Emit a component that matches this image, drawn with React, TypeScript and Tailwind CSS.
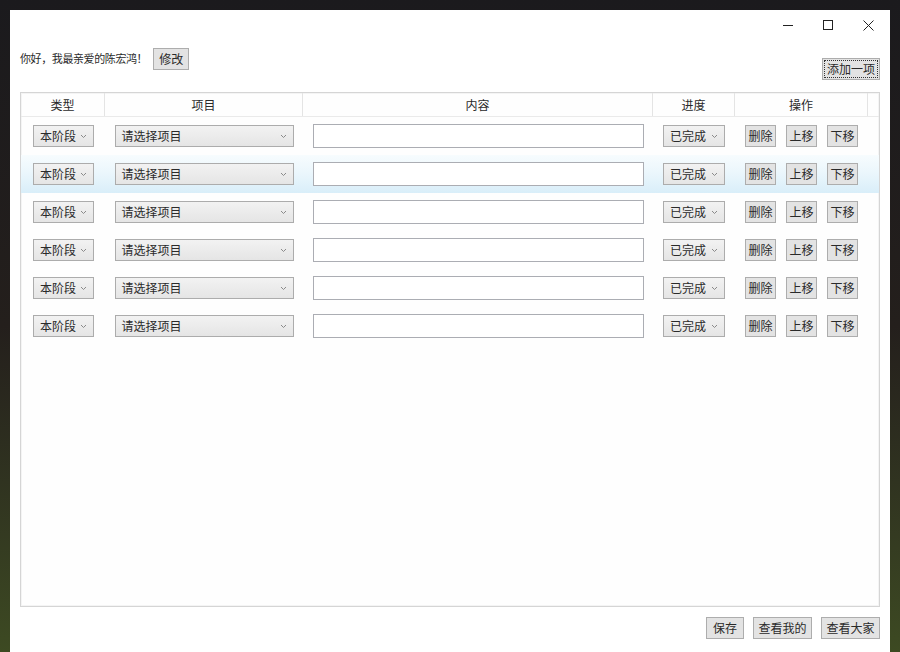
import { ReactNode } from "react";

const rows = [0, 1, 2, 3, 4, 5];

function Chevron() {
  return (
    <svg width="7" height="5" viewBox="0 0 7 5" className="shrink-0">
      <path d="M1 1 L3.5 3.5 L6 1" fill="none" stroke="#8a8a8a" strokeWidth="1" />
    </svg>
  );
}

function Select({ label, w }: { label: string; w: string }) {
  return (
    <div
      className={`${w} h-[22px] flex items-center justify-between pl-[6px] pr-[6px] border border-[#acacac] bg-gradient-to-b from-[#f2f2f2] to-[#e5e5e5] text-[12px] text-[#2a2a2a]`}
    >
      <span>{label}</span>
      <Chevron />
    </div>
  );
}

function Btn({ children, w, focus }: { children: ReactNode; w: string; focus?: boolean }) {
  return (
    <button
      className={`${w} h-[22px] flex items-center justify-center border border-[#adadad] bg-[#e3e3e3] text-[12px] text-[#2a2a2a] ${
        focus ? "outline-1 outline-dotted outline-[#333] outline-offset-[-3px]" : ""
      }`}
    >
      {children}
    </button>
  );
}

export default function App() {
  return (
    <div
      className="w-[900px] h-[652px] overflow-hidden pl-[10px] pt-[10px] bg-gradient-to-b from-[#1b1a1d] via-[#241f1c] to-[#3d4a22]"
      style={{ fontFamily: '"Noto Sans CJK SC", "Noto Sans", sans-serif' }}
    >
      <div className="w-[880px] h-[642px] bg-white flex flex-col">
        {/* 标题栏 */}
        <div className="h-[30px] flex justify-end pr-[2px]">
          <div className="w-10 flex items-center justify-center">
            <div className="w-[10px] h-px bg-[#222]" />
          </div>
          <div className="w-10 flex items-center justify-center">
            <div className="w-[10px] h-[10px] border border-[#222]" />
          </div>
          <div className="w-10 flex items-center justify-center">
            <svg width="11" height="11" viewBox="0 0 11 11">
              <path d="M0.5 0.5 L10.5 10.5 M10.5 0.5 L0.5 10.5" stroke="#222" strokeWidth="1" />
            </svg>
          </div>
        </div>

        <div className="flex justify-between px-[10px]">
          <div className="flex items-center gap-[6px] mt-[8px] h-[21px]">
            <span className="text-[11px] tracking-[-0.4px] text-[#2a2a2a]">你好，我最亲爱的陈宏鸿！</span>
            <Btn w="w-[36px]">修改</Btn>
          </div>
          <div className="mt-[18px]">
            <Btn w="w-[58px]" focus>
              添加一项
            </Btn>
          </div>
        </div>

        {/* 列表 */}
        <div className="mx-[10px] mt-[12px] h-[515px] border border-[#d5d5d5] shadow-[inset_0_0_0_1px_#f4f4f4] bg-[#fefefe] flex flex-col">
          <div className="grid grid-cols-[84px_198px_350px_82px_133px_1fr] h-[24px] border-b border-[#eaeaea] text-[12px] text-[#2a2a2a]">
            <div className="flex items-center justify-center border-r border-[#e4e4e4]">类型</div>
            <div className="flex items-center justify-center border-r border-[#e4e4e4]">项目</div>
            <div className="flex items-center justify-center border-r border-[#e4e4e4]">内容</div>
            <div className="flex items-center justify-center border-r border-[#e4e4e4]">进度</div>
            <div className="flex items-center justify-center border-r border-[#e4e4e4]">操作</div>
            <div />
          </div>
          {rows.map((r) => (
            <div
              key={r}
              className={`grid grid-cols-[84px_198px_350px_82px_133px_1fr] h-[38px] ${
                r === 1 ? "bg-gradient-to-b from-[#f7fcfe] via-[#eaf6fc] to-[#d9eef9]" : ""
              }`}
            >
              <div className="flex items-center justify-center pl-px">
                <Select label="本阶段" w="w-[61px]" />
              </div>
              <div className="flex items-center justify-center">
                <Select label="请选择项目" w="w-[179px]" />
              </div>
              <div className="flex items-center justify-center">
                <input className="w-[331px] h-[24px] border border-[#abadb3] bg-white outline-none" />
              </div>
              <div className="flex items-center justify-center">
                <Select label="已完成" w="w-[62px]" />
              </div>
              <div className="flex items-center justify-center gap-[10px]">
                <Btn w="w-[31px]">删除</Btn>
                <Btn w="w-[31px]">上移</Btn>
                <Btn w="w-[31px]">下移</Btn>
              </div>
              <div />
            </div>
          ))}
        </div>

        <div className="flex justify-end gap-[9px] px-[10px] mt-[10px]">
          <Btn w="w-[38px]">保存</Btn>
          <Btn w="w-[59px]">查看我的</Btn>
          <Btn w="w-[59px]">查看大家</Btn>
        </div>
      </div>
    </div>
  );
}
